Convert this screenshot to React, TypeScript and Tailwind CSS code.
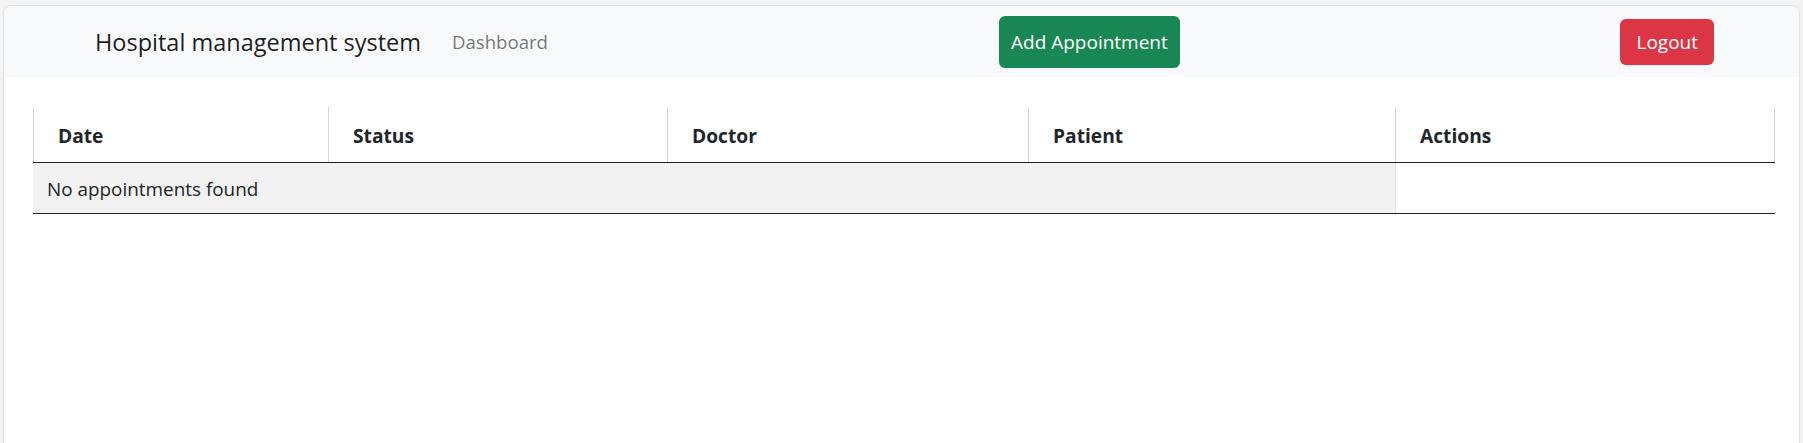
import React from 'react';

const columns = ['Date', 'Status', 'Doctor', 'Patient', 'Actions'];

export default function App() {
  return (
    <div className="w-full h-[443px] bg-[#f3f3f3] pt-[5px] px-[3px] overflow-hidden font-['Open_Sans',sans-serif] text-[#212529]">
      <div className="h-full bg-white rounded-t-[8px] border-l border-t border-r border-[#e2e2e2]">
        {/* Navbar */}
        <nav className="h-[71px] bg-[#f8f9fa] rounded-t-[8px] flex items-center pl-[91px] pr-[85px]">
          <span className="text-[23.5px] text-black/90 leading-none pt-[2px]">Hospital management system</span>
          <a className="ml-[31px] text-[18.6px] text-black/55 leading-none pt-[1px]">Dashboard</a>
          <button className="ml-[451px] h-[52px] px-[12px] pt-[2px] rounded-[6px] bg-[#198754] text-white text-[19px] leading-none">
            Add Appointment
          </button>
          <button className="ml-auto h-[46px] px-[16px] pt-[2px] rounded-[6px] bg-[#dc3545] text-white text-[19px] leading-none">
            Logout
          </button>
        </nav>

        {/* Appointments table */}
        <div className="mt-[30px] ml-[29px] mr-[24px]">
          <div className="grid grid-cols-[295px_339px_361px_367px_380px] h-[56px] border-b border-[#222]">
            {columns.map((c, i) => (
              <div
                key={c}
                className={
                  i === columns.length - 1
                    ? 'flex items-center pl-[24px] pt-[3px] border-l border-r border-[#d6d7dc] font-bold text-[19.2px]'
                    : 'flex items-center pl-[24px] pt-[3px] border-l border-[#d6d7dc] font-bold text-[19.2px]'
                }
              >
                {c}
              </div>
            ))}
          </div>
          <div className="grid grid-cols-[1362px_380px] h-[51px] border-b border-[#222]">
            <div className="bg-[#f2f2f2] flex items-center pl-[14px] pt-[3px] text-[18.9px]">No appointments found</div>
            <div className="border-l border-[#e4e4e4]" />
          </div>
        </div>
      </div>
    </div>
  );
}
